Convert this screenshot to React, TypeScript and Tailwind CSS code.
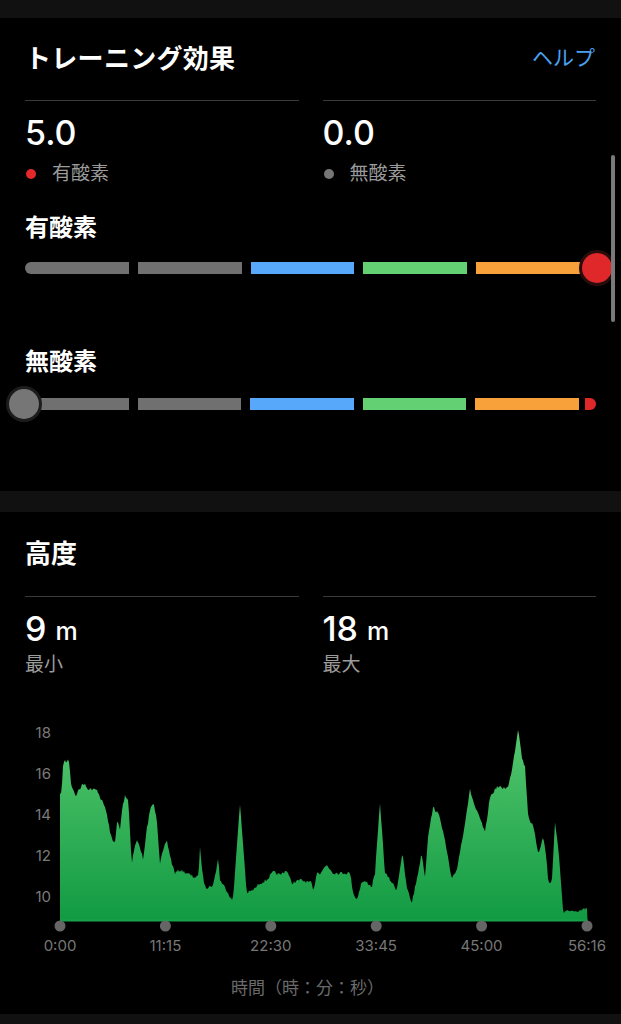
import * as React from 'react';

const FONT = 'font-["Inter","Noto_Sans_CJK_JP",sans-serif]';

// elevation trace, page coordinates (x, y) read off the chart
const TRACE: [number, number][] = [
  [60, 795], [61.7, 790], [63.3, 762], [65, 760], [66, 763], [68.3, 758], [69.5, 765], [71, 783],
  [73, 790], [76.7, 797], [78, 790], [80, 788], [82, 785], [85, 783], [86.7, 788], [90, 789],
  [96.7, 790], [98.3, 792], [100, 797], [105, 807], [108, 820], [110, 833], [113, 840], [115, 843],
  [117.3, 820], [120, 830], [122, 810], [125, 795], [128.3, 800], [131.7, 863], [134, 850],
  [136.7, 840], [140, 847], [143.3, 860], [146.7, 830], [150, 810], [153.3, 803], [156.7, 817],
  [160, 863], [162, 855], [166.7, 840], [171.7, 863], [175, 873], [180, 870], [186.7, 873],
  [193.3, 877], [198.3, 877], [200, 848], [203.3, 880], [206.7, 888], [213.3, 885], [218.3, 858],
  [220, 880], [226.7, 890], [231.7, 900], [233.3, 897], [236.7, 847], [240, 805], [243.3, 847],
  [246.7, 893], [253.3, 890], [260, 883], [266.7, 880], [273.3, 872], [280, 875], [286.7, 870],
  [291.7, 883], [300, 880], [311.7, 883], [313.3, 893], [316.7, 872], [320, 873], [326.7, 865],
  [333.3, 873], [350, 873], [353.3, 893], [356.7, 900], [361.7, 882], [366.7, 882], [371.7, 887],
  [375, 873], [380, 803], [385, 873], [391.7, 882], [396.7, 890], [402.3, 853], [406.7, 887],
  [411.7, 903], [416.7, 880], [421.7, 853], [425, 877], [428.3, 833], [433.3, 807], [440, 817],
  [446.7, 850], [451.7, 880], [456.7, 870], [463.3, 833], [470, 790], [475, 807], [481.7, 823],
  [485, 833], [490, 797], [496.7, 787], [503.3, 788], [508.3, 787], [511.7, 770], [515, 750],
  [518.3, 727], [521.7, 757], [525, 767], [528.3, 817], [533.3, 827], [538.3, 853], [543.3, 837],
  [546.7, 860], [548.3, 883], [551.7, 883], [555, 823], [558.3, 847], [563.3, 913], [570, 910],
  [576.7, 913], [581.7, 910], [586.7, 908], [587.5, 912],
];

const BASE = 921;

function buildArea() {
  let seed = 7;
  const rnd = () => {
    seed = (seed * 16807) % 2147483647;
    return seed / 2147483647;
  };
  const pts: string[] = [`M60,${BASE}`];
  let j = 0;
  for (let x = 60; x <= 587.5; x += 1) {
    while (j < TRACE.length - 2 && TRACE[j + 1][0] < x) j++;
    const [x0, y0] = TRACE[j];
    const [x1, y1] = TRACE[j + 1];
    const t = Math.min(1, Math.max(0, (x - x0) / (x1 - x0)));
    const y = y0 + (y1 - y0) * t + (rnd() - 0.5) * 3.2;
    pts.push(`L${x},${Math.min(BASE - 1, y).toFixed(1)}`);
  }
  pts.push(`L587.5,${BASE} Z`);
  return pts.join(' ');
}

const AREA = buildArea();
const TICKS = ['0:00', '11:15', '22:30', '33:45', '45:00', '56:16'];

function Stat({ value, unit, label, dot }: { value: string; unit?: string; label: string; dot?: string }) {
  return (
    <div>
      <div className="h-px bg-[#3a3a3a]" />
      <div className="mt-[12px] h-[40px] flex items-center text-white">
        <span className="text-[34px] font-medium leading-none">{value}</span>
        {unit && <span className="ml-[9px] text-[25px] font-medium leading-none mt-[4px]">{unit}</span>}
      </div>
      <div className={`${dot ? 'mt-[9px]' : 'mt-[4px]'} h-[24px] flex items-center text-[19px] text-[#9b9b9b]`}>
        {dot && <span className={`w-[10px] h-[10px] rounded-full ${dot} ml-[1px] mr-[16px]`} />}
        {label}
      </div>
    </div>
  );
}

function Segments() {
  return (
    <div className="flex gap-[9px] w-[555px]">
      <div className="flex-1 h-[12px] bg-[#707070] rounded-l-full" />
      <div className="flex-1 h-[12px] bg-[#707070]" />
      <div className="flex-1 h-[12px] bg-[#57a8fb]" />
      <div className="flex-1 h-[12px] bg-[#62d073]" />
      <div className="flex-1 h-[12px] bg-[#f8a03a]" />
    </div>
  );
}

export default function App() {
  return (
    <div className={`${FONT} bg-[#111111] pt-[18px] pb-[10px] w-[621px]`}>
      {/* training effect */}
      <section className="relative bg-black px-[25px] pt-[24px] pb-[71px]">
        <div className="h-[32px] flex items-center justify-between">
          <h2 className="text-[26px] font-bold text-white tracking-[0.3px]">トレーニング効果</h2>
          <span className="text-[21px] text-[#4aa0f0] mr-[1px]">ヘルプ</span>
        </div>
        <div className="mt-[26px] grid grid-cols-2 gap-x-[24px]">
          <Stat value="5.0" label="有酸素" dot="bg-[#e3292b]" />
          <Stat value="0.0" label="無酸素" dot="bg-[#767676]" />
        </div>

        <h3 className="mt-[27px] h-[30px] flex items-center text-[24px] font-semibold text-white">有酸素</h3>
        <div className="relative mt-[9px] h-[32px] flex items-center">
          <Segments />
          <div className="absolute right-[-16px] top-[1px] w-[30px] h-[30px] rounded-full bg-[#e0282a] ring-[3px] ring-[#2a0c0c]" />
        </div>

        <h3 className="mt-[63px] h-[30px] flex items-center text-[24px] font-semibold text-white">無酸素</h3>
        <div className="relative mt-[11px] h-[32px] flex items-center">
          <Segments />
          <div className="ml-[6px] w-[11px] h-[12px] rounded-r-full bg-[#e0282a]" />
          <div className="absolute left-[-16px] top-[1px] w-[30px] h-[30px] rounded-full bg-[#767676] ring-[3px] ring-[#1c1c1c]" />
        </div>

        {/* scroll indicator */}
        <div className="absolute right-[6px] top-[137px] w-[4px] h-[167px] rounded-full bg-[#7a7a7a]" />
      </section>

      {/* altitude */}
      <section className="mt-[21px] bg-black px-[25px] pt-[26px] pb-[13px]">
        <h2 className="h-[30px] flex items-center text-[26px] font-bold text-white">高度</h2>
        <div className="mt-[28px] grid grid-cols-2 gap-x-[24px]">
          <Stat value="9" unit="m" label="最小" />
          <Stat value="18" unit="m" label="最大" />
        </div>

        <div className="mt-[35px] flex items-start">
          <div className="w-[29px] flex flex-col items-end pr-[3px] text-[15px] text-[#7a7a7a]">
            {['18', '16', '14', '12', '10'].map((v) => (
              <div key={v} className="h-[41px] leading-[41px]">{v}</div>
            ))}
          </div>
          <svg width="542" height="220" viewBox="54 712 542 220" className="block">
            <defs>
              <linearGradient id="alt" x1="0" y1="0" x2="0" y2="1">
                <stop offset="0%" stopColor="#55c76e" />
                <stop offset="100%" stopColor="#119a42" />
              </linearGradient>
            </defs>
            <path d={AREA} fill="url(#alt)" />
            <rect x="60" y={BASE - 1.5} width="527.5" height="2" fill="#16a34a" />
            {TICKS.map((_, i) => (
              <circle key={i} cx={60 + 105.4 * i} cy={926} r={5.5} fill="#666666" />
            ))}
          </svg>
        </div>

        <div className="mt-[4px] ml-[5px] w-[587px] flex justify-between">
          {TICKS.map((t) => (
            <span key={t} className="w-[60px] text-center text-[15px] leading-[20px] text-[#777777]">{t}</span>
          ))}
        </div>
        <div className="mt-[21px] h-[24px] flex items-center justify-center text-[17px] text-[#6a6a6a] pr-[6px]">
          時間（時：分：秒）
        </div>
      </section>
    </div>
  );
}
